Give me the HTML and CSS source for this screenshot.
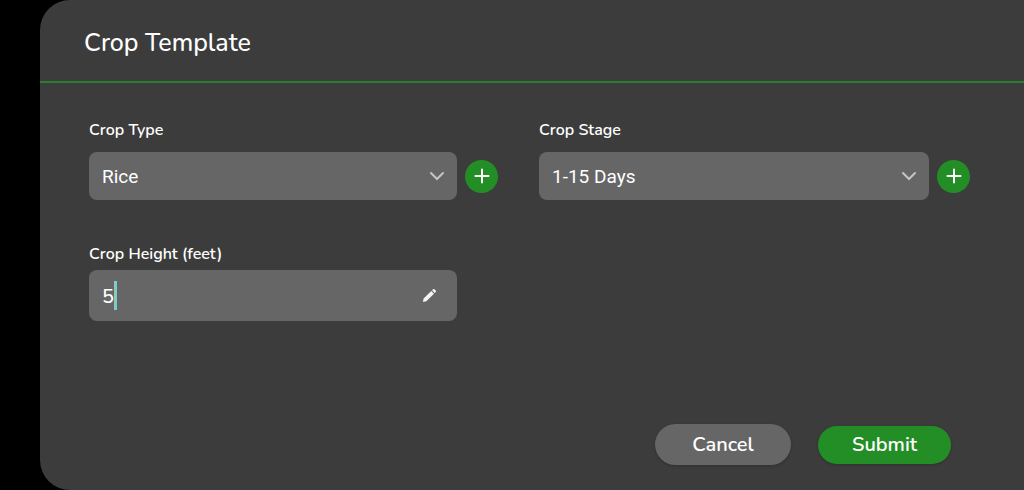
FILE: index.html
```html
<!DOCTYPE html>
<html lang="en">
<head>
<meta charset="utf-8">
<meta name="viewport" content="width=device-width, initial-scale=1">
<title>Crop Template</title>
<link rel="stylesheet" href="styles.css">
</head>
<body>
<main class="panel">
  <header class="panel-header">
    <h1 class="title">Crop Template</h1>
  </header>
  <form class="form">
    <div class="fields">
      <div class="field">
        <label class="label" for="crop-type">Crop Type</label>
        <div class="control-row">
          <div class="control">
            <select class="box select" id="crop-type"><option>Rice</option></select>
            <svg class="chevron" viewBox="0 0 16 10" aria-hidden="true"><path d="M2 2 8 8l6-6"/></svg>
          </div>
          <button class="add" type="button" aria-label="Add crop type">
            <svg class="plus" viewBox="0 0 16 16" aria-hidden="true"><path d="M8 1.500v13M1.500 8h13"/></svg>
          </button>
        </div>
      </div>
      <div class="field">
        <label class="label" for="crop-stage">Crop Stage</label>
        <div class="control-row">
          <div class="control">
            <select class="box select" id="crop-stage"><option>1-15 Days</option></select>
            <svg class="chevron" viewBox="0 0 16 10" aria-hidden="true"><path d="M2 2 8 8l6-6"/></svg>
          </div>
          <button class="add" type="button" aria-label="Add crop stage">
            <svg class="plus" viewBox="0 0 16 16" aria-hidden="true"><path d="M8 1.500v13M1.500 8h13"/></svg>
          </button>
        </div>
      </div>
      <div class="field field-height">
        <label class="label" for="crop-height">Crop Height (feet)</label>
        <div class="control">
          <input class="box input" id="crop-height" type="text" inputmode="decimal" value="5">
          <span class="caret"></span>
          <svg class="pencil" viewBox="0 0 16 16" aria-hidden="true"><path d="M1 15l.7-3.900L9.900 3.200l2.900 2.900L4.600 14.200zM10.700 2.400l1.100-1.100q.8-.7 1.500 0l1.400 1.400q.7.700 0 1.500l-1.100 1.100z"/></svg>
        </div>
      </div>
    </div>
    <footer class="actions">
      <button class="action cancel" type="button">Cancel</button>
      <button class="action submit" type="submit">Submit</button>
    </footer>
  </form>
</main>
</body>
</html>
```
FILE: styles.css
```css
* {
  box-sizing: border-box;
}

body {
  margin: 0;
  background: #000;
  color: #fff;
  font-family: Nunito, "Noto Sans", sans-serif;
}

.panel {
  display: flex;
  flex-direction: column;
  min-height: 100vh;
  margin-left: 40px;
  border-radius: 30px 0 0 30px;
  background: #3c3c3c;
}

.panel-header {
  padding: 27px 44px 22px;
  border-bottom: 2px solid #2b7d30;
}

.title {
  margin: 0;
  font-size: 25px;
  line-height: 32px;
  font-weight: 500;
}

.form {
  display: flex;
  flex: 1;
  flex-direction: column;
  justify-content: space-between;
  padding: 35px 54px 25px 49px;
}

.fields {
  display: grid;
  grid-template-columns: 409fr 431fr;
  gap: 42px 41px;
}

.field {
  display: flex;
  flex-direction: column;
  gap: 10px;
}

.field-height {
  gap: 4px;
  padding-right: 41px;
}

.label {
  font-size: 16px;
  line-height: 24px;
  font-weight: 600;
}

.control-row {
  display: flex;
  align-items: center;
  gap: 8px;
}

.control {
  position: relative;
  flex: 1;
}

.box {
  display: block;
  width: 100%;
  height: 48px;
  padding: 1px 44px 0 13px;
  border: 0;
  border-radius: 8px;
  outline: 0;
  appearance: none;
  background: #666;
  color: #fff;
  font-family: Roboto, sans-serif;
  font-size: 19px;
}

.input {
  height: 51px;
  font-family: Nunito, "Noto Sans", sans-serif;
  font-size: 20px;
  font-weight: 500;
}

.chevron {
  position: absolute;
  top: 19px;
  right: 12px;
  width: 16px;
  height: 10px;
  fill: none;
  stroke: #c4c4c4;
  stroke-width: 2;
  stroke-linecap: round;
  pointer-events: none;
}

.caret {
  position: absolute;
  top: 11px;
  left: 25px;
  width: 3px;
  height: 29px;
  background: #80cbc4;
}

.pencil {
  position: absolute;
  top: 18px;
  right: 20px;
  width: 15px;
  height: 15px;
  fill: #f4f4f4;
}

.add {
  display: grid;
  place-items: center;
  width: 33px;
  height: 33px;
  padding: 0;
  border: 0;
  border-radius: 50%;
  background: #238e26;
}

.plus {
  width: 16px;
  height: 16px;
  fill: none;
  stroke: #fff;
  stroke-width: 2;
  stroke-linecap: round;
}

.actions {
  display: flex;
  justify-content: flex-end;
  align-items: center;
  gap: 27px;
  padding-right: 19px;
}

.action {
  padding: 0 33px;
  border: 0;
  border-radius: 24px;
  color: #fff;
  font-family: inherit;
  font-size: 20px;
  font-weight: 600;
  box-shadow: 0 1px 3px rgba(0, 0, 0, 0.2);
}

.cancel {
  min-width: 136px;
  height: 41px;
  background: #666;
}

.submit {
  min-width: 133px;
  height: 38px;
  background: #238e26;
}
```
